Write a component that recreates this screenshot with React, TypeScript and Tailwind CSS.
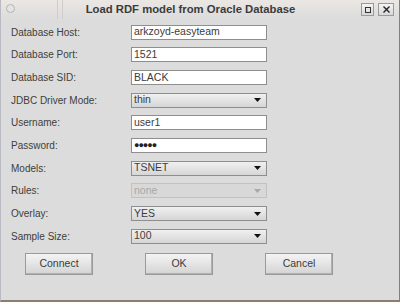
import React from "react";

const font = { fontFamily: '"Liberation Sans", Arial, sans-serif' };

function TextField({ value, password }: { value: string; password?: boolean }) {
  return (
    <div className="w-[136px] h-[15px] bg-white border border-[#8e8e8e] flex items-center pl-[2px] text-[10.5px] text-[#3c3c3c]">
      {password ? <span className="tracking-[-1px] text-[9px] font-bold text-[#222]">●●●●●</span> : value}
    </div>
  );
}

function Select({ value, disabled }: { value: string; disabled?: boolean }) {
  return (
    <div
      className={
        "w-[136px] h-[15px] border flex items-center justify-between pl-[2px] pr-[5px] text-[10.5px] " +
        (disabled
          ? "border-[#c2c2c2] bg-[#d8d8d8] text-[#a8a8a8]"
          : "border-[#8e8e8e] bg-gradient-to-b from-[#f0f0f0] to-[#d6d6d6] text-[#3c3c3c]")
      }
    >
      <span>{value}</span>
      <svg width="7" height="4" viewBox="0 0 7 4">
        <polygon points="0,0 7,0 3.5,4" fill={disabled ? "#a8a8a8" : "#111"} />
      </svg>
    </div>
  );
}

function Row({ label, children }: { label: string; children: React.ReactNode }) {
  return (
    <div className="h-[22.67px] flex items-center">
      <div className="w-[130px] shrink-0 pl-[10px] text-[10px] text-[#3e3e3a]">{label}</div>
      {children}
    </div>
  );
}

function Btn({ label }: { label: string }) {
  return (
    <div className="w-[68px] h-[22px] border border-[#9a9a9a] bg-gradient-to-b from-[#f4f4f4] to-[#d4d4d4] flex items-center justify-center text-[10.5px] text-[#3c3c3c] shadow-[inset_-1px_-1px_0_#b0b0b0]">
      {label}
    </div>
  );
}

export default function App() {
  return (
    <div
      className="w-[400px] h-[302px] bg-[#dcdcdc] overflow-hidden flex flex-col border-l border-l-[#b9bac4] border-r border-r-[#8d7d6e] border-b-2 border-b-[#8d7d6e]"
      style={font}
    >
      {/* title bar */}
      <div className="h-[19px] relative flex items-center justify-center bg-gradient-to-b from-[#ebe7e3] to-[#dcdcdc]">
        <div className="absolute left-[5px] top-[4px] w-[9px] h-[9px] rounded-full border border-[#b4b4b4] bg-[#e4e4e4]" />
        <div className="absolute left-[56px] top-0 w-[1px] h-[19px] bg-[#d0ccc8]" />
        <div className="absolute left-[61px] top-0 w-[1px] h-[19px] bg-[#d0ccc8]" />
        <span className="text-[11.3px] font-bold text-[#3b3b3b] ml-[-19px]">Load RDF model from Oracle Database</span>
        <div className="absolute right-[25px] top-[3px] w-[13px] h-[13px] border border-[#9a9a9a] bg-gradient-to-b from-[#f4f4f4] to-[#d8d8d8] flex items-center justify-center">
          <div className="w-[6px] h-[6px] border border-[#333]" />
        </div>
        <div className="absolute right-[5px] top-[3px] w-[16px] h-[13px] border border-[#9a9a9a] bg-gradient-to-b from-[#f4f4f4] to-[#d8d8d8] flex items-center justify-center">
          <svg width="7" height="7" viewBox="0 0 7 7">
            <path d="M0.5 0.5 L6.5 6.5 M6.5 0.5 L0.5 6.5" stroke="#222" strokeWidth="1.4" />
          </svg>
        </div>
      </div>

      <div className="flex flex-col pt-[2px]">
        <Row label="Database Host:"><TextField value="arkzoyd-easyteam" /></Row>
        <Row label="Database Port:"><TextField value="1521" /></Row>
        <Row label="Database SID:"><TextField value="BLACK" /></Row>
        <Row label="JDBC Driver Mode:"><Select value="thin" /></Row>
        <Row label="Username:"><TextField value="user1" /></Row>
        <Row label="Password:"><TextField value="" password /></Row>
        <Row label="Models:"><Select value="TSNET" /></Row>
        <Row label="Rules:"><Select value="none" disabled /></Row>
        <Row label="Overlay:"><Select value="YES" /></Row>
        <Row label="Sample Size:"><Select value="100" /></Row>
      </div>

      <div className="flex pl-[24px] gap-[52px] mt-[5px]">
        <Btn label="Connect" />
        <Btn label="OK" />
        <Btn label="Cancel" />
      </div>
    </div>
  );
}
